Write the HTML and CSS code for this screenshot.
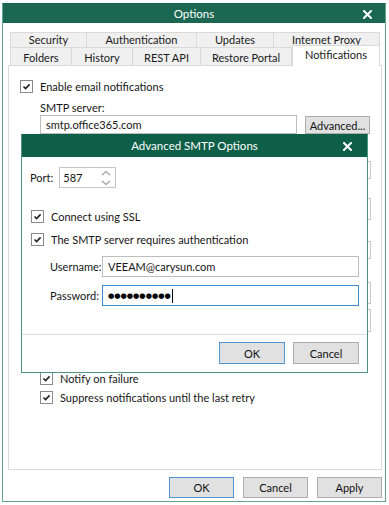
FILE: index.html
```html
<!DOCTYPE html>
<html>
<head>
<meta charset="utf-8">
<link rel="stylesheet" href="styles.css">
</head>
<body>
<div class="window">
  <div class="titlebar">
    <span></span>
    <span class="title">Options</span>
    <span class="close"><svg width="9" height="9" viewBox="0 0 9 9"><path d="M1 1L8 8M8 1L1 8" stroke="#fff" stroke-width="2" stroke-linecap="square"/></svg></span>
  </div>

  <div class="tabs">
    <div class="tabrow row1">
      <div class="tab">Security</div>
      <div class="tab">Authentication</div>
      <div class="tab">Updates</div>
      <div class="tab">Internet Proxy</div>
    </div>
    <div class="tabrow row2">
      <div class="tab">Folders</div>
      <div class="tab">History</div>
      <div class="tab">REST API</div>
      <div class="tab">Restore Portal</div>
      <div class="tab active">Notifications</div>
    </div>
  </div>

  <div class="panel">
    <label class="check-row">
      <span class="chk"><svg width="11" height="11" viewBox="0 0 11 11"><path d="M2.5 5.5L4.6 7.6L8.6 3.4" fill="none" stroke="#222" stroke-width="1.6"/></svg></span>
      <span>Enable email notifications</span>
    </label>
    <div class="indent">
      <div class="field-label">SMTP server:</div>
      <div class="server-row">
        <div class="input server">smtp.office365.com</div>
        <div class="btn adv">Advanced...</div>
      </div>
    </div>

    <div class="under">
      <div class="ghost g1"></div>
      <div class="ghost g2"></div>
      <div class="ghost g3"></div>
      <div class="ghost g4"></div>
      <div class="ghost g5"></div>
    </div>

    <div class="indent">
      <label class="check-row">
        <span class="chk"><svg width="11" height="11" viewBox="0 0 11 11"><path d="M2.5 5.5L4.6 7.6L8.6 3.4" fill="none" stroke="#222" stroke-width="1.6"/></svg></span>
        <span>Notify on failure</span>
      </label>
      <label class="check-row second">
        <span class="chk"><svg width="11" height="11" viewBox="0 0 11 11"><path d="M2.5 5.5L4.6 7.6L8.6 3.4" fill="none" stroke="#222" stroke-width="1.6"/></svg></span>
        <span>Suppress notifications until the last retry</span>
      </label>
    </div>
  </div>

  <div class="footer">
    <div class="btn default">OK</div>
    <div class="btn">Cancel</div>
    <div class="btn">Apply</div>
  </div>

  <div class="modal">
    <div class="titlebar modal-title">
      <span></span>
      <span class="title">Advanced SMTP Options</span>
      <span class="close"><svg width="9" height="9" viewBox="0 0 9 9"><path d="M1 1L8 8M8 1L1 8" stroke="#fff" stroke-width="2" stroke-linecap="square"/></svg></span>
    </div>
    <div class="modal-body">
      <div class="port-row">
        <span class="port-label">Port:</span>
        <div class="spinner">
          <span class="spin-value">587</span>
          <span class="spin-arrows">
            <svg width="10" height="6" viewBox="0 0 10 6"><path d="M1 5L5 1.5L9 5" fill="none" stroke="#a0a0a0" stroke-width="1.2"/></svg>
            <svg width="10" height="6" viewBox="0 0 10 6"><path d="M1 1L5 4.5L9 1" fill="none" stroke="#a0a0a0" stroke-width="1.2"/></svg>
          </span>
        </div>
      </div>
      <label class="check-row ssl">
        <span class="chk"><svg width="11" height="11" viewBox="0 0 11 11"><path d="M2.5 5.5L4.6 7.6L8.6 3.4" fill="none" stroke="#222" stroke-width="1.6"/></svg></span>
        <span>Connect using SSL</span>
      </label>
      <label class="check-row auth">
        <span class="chk"><svg width="11" height="11" viewBox="0 0 11 11"><path d="M2.5 5.5L4.6 7.6L8.6 3.4" fill="none" stroke="#222" stroke-width="1.6"/></svg></span>
        <span>The SMTP server requires authentication</span>
      </label>
      <div class="cred-row user">
        <span class="cred-label">Username:</span>
        <div class="input cred">VEEAM@carysun.com</div>
      </div>
      <div class="cred-row pass">
        <span class="cred-label">Password:</span>
        <div class="input cred focused"><span class="dots">●●●●●●●●●●</span><span class="caret"></span></div>
      </div>
    </div>
    <div class="modal-footer">
      <div class="btn default mbtn">OK</div>
      <div class="btn mbtn">Cancel</div>
    </div>
  </div>
</div>
</body>
</html>
```

FILE: styles.css
```css
* { box-sizing: border-box; }
html, body { margin: 0; padding: 0; background: #fff; }
body {
  font-family: Lato, "Liberation Sans", sans-serif;
  font-size: 11px;
  color: #161616;
  width: 389px;
  height: 505px;
  overflow: hidden;
}

.window {
  margin: 3px 0 0 2px;
  width: 384px;
  height: 499px;
  border: 1px solid #67a593;
  border-top-color: #1b6751;
  background: #fff;
  position: relative;
  display: flex;
  flex-direction: column;
}

.titlebar {
  height: 19px;
  background: #1b6751;
  color: #fff;
  display: grid;
  grid-template-columns: 1fr auto 1fr;
  align-items: center;
  font-size: 11.5px;
}
.titlebar .title { line-height: 18px; }
.titlebar .close {
  justify-self: end;
  margin-right: 13px;
  display: flex;
  margin-top: 1px;
}

.tabs {
  margin: 9px 0 0 7px;
  width: 370px;
}
.tabrow { display: grid; }
.row1 { grid-template-columns: 77px 110px 77px 106px; height: 15px; }
.row2 { grid-template-columns: 62px 61px 68px 91px 88px; height: 18px; }
.tab {
  background: #f0f0f0;
  border-top: 1px solid #d9d9d9;
  border-right: 1px solid #d9d9d9;
  display: flex;
  align-items: center;
  justify-content: center;
  color: #1a1a1a;
  line-height: 13px;
  overflow: visible;
}
.tab:first-child { border-left: 1px solid #d9d9d9; }
.row1 .tab { padding-bottom: 1px; }
.row2 .tab { padding-top: 1px; }
.tab.active {
  background: #fff;
  margin-top: -2px;
  height: 21px;
  border-left: 1px solid #d9d9d9;
  position: relative;
  z-index: 2;
  padding-top: 0;
  padding-bottom: 3px;
}

.panel {
  margin-left: 5px;
  width: 374px;
  height: 405px;
  border: 1px solid #dadada;
  padding: 14px 0 0 11px;
  position: relative;
  z-index: 1;
}

.check-row {
  display: flex;
  align-items: center;
  gap: 7px;
  height: 13px;
}
.chk {
  width: 13px;
  height: 13px;
  border: 1px solid #8a8a8a;
  background: #fff;
  display: flex;
  align-items: center;
  justify-content: center;
  flex: none;
}

.indent { margin-left: 20px; }
.field-label { margin-top: 8px; line-height: 14px; }
.server-row { display: flex; align-items: flex-start; gap: 8px; }
.input {
  border: 1px solid #bdbdbd;
  background: #fff;
  display: flex;
  align-items: center;
  padding-left: 5px;
}
.input.server { width: 257px; height: 19px; }

.btn {
  width: 65px;
  height: 21px;
  background: #e1e1e1;
  border: 1px solid #adadad;
  display: flex;
  align-items: center;
  justify-content: center;
  color: #111;
}
.btn.default { border-color: #4f93cf; }
.btn.adv { height: 18px; margin-top: 1px; }

.under {
  height: 238px;
  padding-right: 10px;
  display: flex;
  flex-direction: column;
  align-items: flex-end;
}
.ghost { width: 70px; border: 1px solid #c8c8c8; background: #fff; }
.g1 { margin-top: 27px; height: 18px; }
.g2 { margin-top: 19px; height: 22px; }
.g3 { margin-top: 21px; height: 18px; }
.g4 { margin-top: 23px; height: 22px; }
.g5 { margin-top: 5px; height: 23px; }

.check-row.second { margin-top: 6px; }

.footer {
  margin-top: 7px;
  display: flex;
  justify-content: flex-end;
  gap: 9px;
  padding-right: 3px;
}

.modal {
  position: absolute;
  left: 18px;
  top: 130px;
  width: 347px;
  height: 239px;
  border: 1px solid #4f9482;
  border-top-color: #0e5f48;
  background: #fff;
  z-index: 5;
  display: flex;
  flex-direction: column;
}
.modal-title {
  height: 22px;
  background: #0e5f48;
  font-size: 11.5px;
}
.modal-title .title { line-height: 22px; }
.modal-title .close { margin-right: 15px; margin-top: 0; }

.modal-body {
  flex: 1;
  padding: 10px 0 0 8px;
}
.port-row { display: flex; align-items: center; gap: 6px; }
.spinner {
  width: 57px;
  height: 21px;
  border: 1px solid #c6c6c6;
  display: flex;
  align-items: stretch;
}
.spin-value { flex: 1; padding-left: 3px; display: flex; align-items: center; }
.spin-arrows {
  width: 17px;
  display: flex;
  flex-direction: column;
  align-items: center;
  justify-content: center;
  gap: 4px;
  margin-right: 1px;
}
.spin-arrows svg { display: block; }

.check-row.ssl { margin-top: 22px; margin-left: 1px; }
.check-row.auth { margin-top: 10px; margin-left: 1px; }

.cred-row { display: flex; align-items: center; margin-left: 20px; }
.cred-row.user { margin-top: 10px; }
.cred-row.pass { margin-top: 8px; }
.cred-label { width: 52px; }
.input.cred { width: 257px; height: 21px; }
.input.focused { border-color: #3d8bd2; }
.dots {
  font-family: "DejaVu Sans", sans-serif;
  font-size: 7.2px;
  letter-spacing: 0px;
  color: #000;
}
.caret {
  width: 1px;
  height: 14px;
  background: #000;
  margin-left: 1px;
}

.modal-footer {
  border-top: 1px solid #dedede;
  height: 38px;
  display: flex;
  justify-content: flex-end;
  align-items: flex-start;
  gap: 8px;
  padding: 7px 8px 0 0;
}
.mbtn { width: 66px; height: 22px; }
```
